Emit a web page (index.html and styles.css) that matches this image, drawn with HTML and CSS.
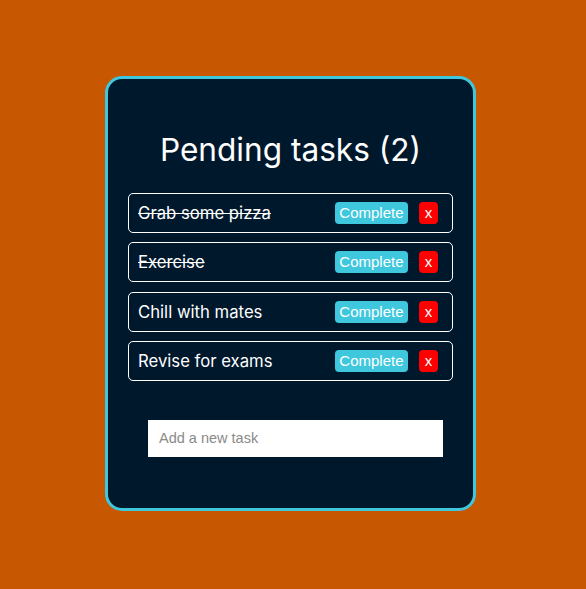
FILE: index.html
```html
<!DOCTYPE html>
<html lang="en">
<head>
<meta charset="utf-8">
<title>Todo</title>
<link rel="stylesheet" href="styles.css">
</head>
<body>
<main class="card">
  <h1 class="title">Pending tasks (2)</h1>
  <ul class="tasks">
    <li class="task"><span class="task-name done">Grab some pizza</span><button class="btn complete">Complete</button><button class="btn remove">x</button></li>
    <li class="task"><span class="task-name done">Exercise</span><button class="btn complete">Complete</button><button class="btn remove">x</button></li>
    <li class="task"><span class="task-name">Chill with mates</span><button class="btn complete">Complete</button><button class="btn remove">x</button></li>
    <li class="task"><span class="task-name">Revise for exams</span><button class="btn complete">Complete</button><button class="btn remove">x</button></li>
  </ul>
  <input class="new-task" type="text" placeholder="Add a new task" autofocus>
</main>
</body>
</html>
```

FILE: styles.css
```css
html, body {
  margin: 0;
  padding: 0;
}
body {
  background: #c75700;
  width: 586px;
  height: 589px;
  overflow: hidden;
  font-family: Inter, "Noto Sans", sans-serif;
}
.card {
  box-sizing: border-box;
  width: 371px;
  height: 435px;
  margin: 76px 0 0 105px;
  background: #00182c;
  border: 3px solid #3ec7dd;
  border-radius: 17px;
  padding: 0 20px;
  display: flex;
  flex-direction: column;
}
.title {
  margin: 51px 0 0;
  text-align: center;
  color: #ffffff;
  font-weight: 400;
  font-size: 31.6px;
  line-height: 40px;
}
.tasks {
  list-style: none;
  margin: 23px 0 0;
  padding: 0;
  display: flex;
  flex-direction: column;
  gap: 9.33px;
}
.task {
  box-sizing: border-box;
  height: 40px;
  border: 1px solid #ffffff;
  border-radius: 5px;
  display: flex;
  align-items: center;
  padding: 0 14px 0 9px;
  color: #ffffff;
}
.task-name {
  flex: 1;
  font-size: 16.7px;
}
.done {
  text-decoration: line-through;
}
.btn {
  border: none;
  border-radius: 4px;
  height: 22px;
  color: #ffffff;
  font-family: "Liberation Sans", Arial, sans-serif;
  font-size: 15px;
  line-height: 22px;
}
.complete {
  background: #3ec7dd;
  padding: 0 4.5px;
}
.remove {
  background: #ff0000;
  padding: 0 5.75px;
  margin-left: 11px;
}
.new-task {
  box-sizing: border-box;
  width: 295px;
  height: 37px;
  margin: 39px 0 0 20px;
  border: none;
  outline: none;
  padding: 0 11px;
  background: #ffffff;
  font-family: "Liberation Sans", Arial, sans-serif;
  font-size: 14.5px;
  color: #222;
}
.new-task::placeholder {
  color: #8a8a8a;
}
```
